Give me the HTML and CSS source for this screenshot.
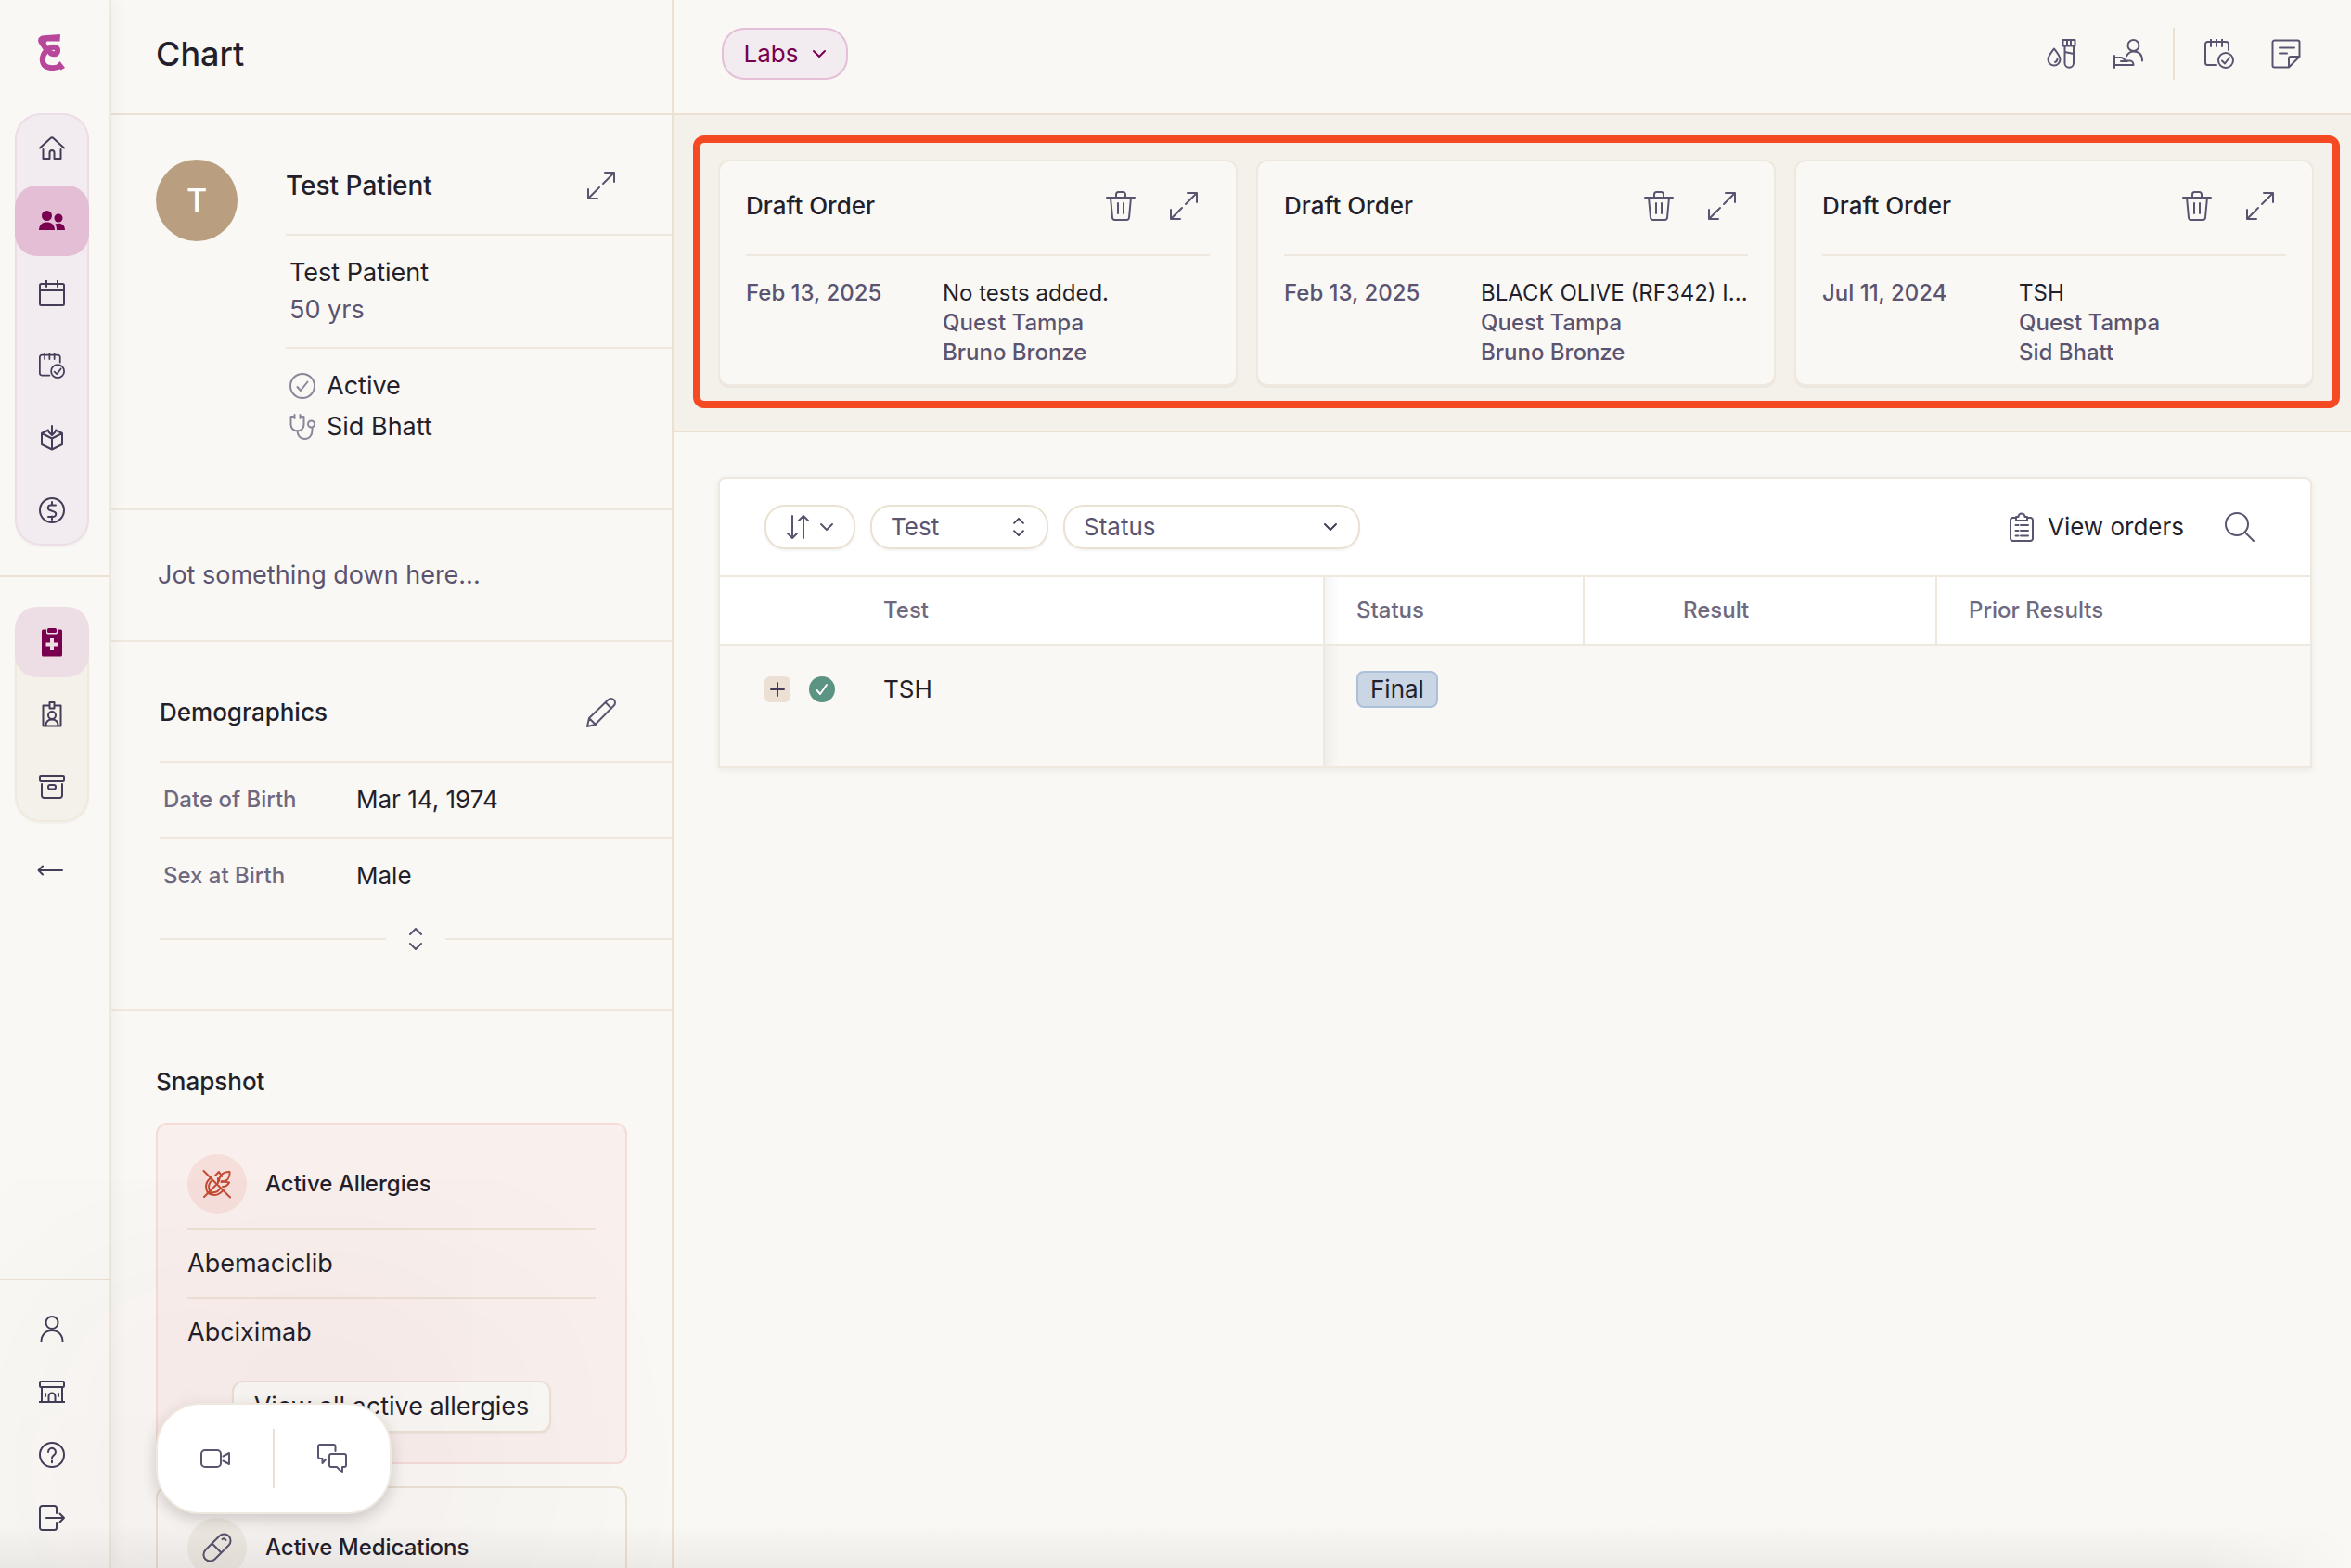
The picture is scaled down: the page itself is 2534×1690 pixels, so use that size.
FILE: index.html
```html
<!DOCTYPE html>
<html lang="en">
<head>
<meta charset="utf-8">
<title>Chart – Labs</title>
<link rel="stylesheet" href="styles.css">
</head>
<body>
<svg class="defs" aria-hidden="true">
  <symbol id="i-expand" viewBox="0 0 32 32"><path d="M18 14 29.500 2.500M20 2h10v10M14 18 2.500 29.500M2 20v10h10"/></symbol>
  <symbol id="i-trash" viewBox="0 0 32 32"><path d="M1 7h30M11 7V3.500A2.500 2.500 0 0 1 13.500 1h5A2.500 2.500 0 0 1 21 3.500V7M5 7l2 21.500A2.500 2.500 0 0 0 9.500 31h13a2.500 2.500 0 0 0 2.500-2.500L27 7M13 13v11M19 13v11"/></symbol>
  <symbol id="i-chev" viewBox="0 0 14 10"><path d="m1 2 6 6 6-6"/></symbol>
  <symbol id="i-updown" viewBox="0 0 16 24"><path d="m2 7 6-6 6 6M2 17l6 6 6-6"/></symbol>
  <symbol id="i-calcheck" viewBox="0 0 32 32"><path d="M13 28H3.500A2.500 2.500 0 0 1 1 25.500v-20A2.500 2.500 0 0 1 3.500 3h20A2.500 2.500 0 0 1 26 5.500V12M7 .500V8M13 .500V8M19 .500V8"/><circle cx="23" cy="23" r="8"/><path d="m19 23.500 3 3 5-6.500"/></symbol>
</svg>

<nav class="rail" aria-label="Main">
  <a class="logo" href="#" aria-label="Home page"><svg width="30" height="42" viewBox="0 0 30 42"><path d="M24 0 23.500 7.500 9.500 7.500 8.500 9.500 12.500 15.500 8 20 1.500 10.500C-1.500 5.500 .500 1.800 6 1.200zM23.500 29 29 36 24.500 38.500 20 33z"/><path class="swirl" d="M12.500 18c1 4 7.500 4.500 8.500 .500 .800-4.500-4-6-8.500-3.500C6 18.500 3.500 26 5.500 31c2 5.500 12 7 20 2.500"/></svg></a>
  <div class="pill pill-main">
    <a href="#" aria-label="Home"><svg width="28" height="28" viewBox="0 0 28 28"><path d="M1 13.500 12.500 3a2 2 0 0 1 3 0L27 13.500M4.500 15v10h7v-6.500a2.500 2.500 0 0 1 5 0V25h7V15"/></svg></a>
    <a href="#" class="on" aria-label="Patients"><svg class="solid" width="28" height="28" viewBox="0 0 28 28"><circle cx="8.500" cy="8.500" r="5.500"/><path d="M0 24c0-6 4-8.500 8.500-8.500S17 18 17 24z"/><circle cx="21" cy="11" r="4.500"/><path d="M19 24c0-3-.500-4.500-1.500-6.500C23 15.500 28 18 28 24z"/></svg></a>
    <a href="#" aria-label="Calendar"><svg width="28" height="28" viewBox="0 0 28 28"><rect x="1" y="4" width="26" height="23" rx="1.500"/><path d="M1 11h26M8 0v7M20 0v7"/></svg></a>
    <a href="#" aria-label="Tasks"><svg width="28" height="28"><use href="#i-calcheck"/></svg></a>
    <a href="#" aria-label="Inbox"><svg width="28" height="28" viewBox="0 0 28 28"><path d="M10 5.500 3 9l11 5.500L25 9l-7-3.500M3 9v12l11 5.500L25 21V9M14 14.500v12M14 1v10M10.500 7.500 14 11l3.500-3.500"/></svg></a>
    <a href="#" aria-label="Billing"><svg width="28" height="28" viewBox="0 0 28 28"><circle cx="14" cy="14" r="13"/><path d="M18 8.500h-5.500a2.750 2.750 0 0 0-1 5.300l5 1.800a2.750 2.750 0 0 1-1 5.300H10M14 5v3.500M14 20.500V24"/></svg></a>
  </div>
  <hr>
  <div class="pill pill-chart">
    <a href="#" class="on" aria-label="Chart"><svg class="solid" width="28" height="32" viewBox="0 0 28 32"><path d="M4.500 2.500H8v3.200c0 1 .800 1.800 1.800 1.800h8.400c1 0 1.800-.800 1.800-1.800V2.500h3.500A1.500 1.500 0 0 1 25 4v26a1.500 1.500 0 0 1-1.500 1.500h-19A1.500 1.500 0 0 1 3 30V4a1.500 1.500 0 0 1 1.500-1.500zM12 12v4.500H7.500v4H12V25h4v-4.500h4.500v-4H16V12z"/><rect x="9" y="1" width="10" height="5" rx="1.500"/></svg></a>
    <a href="#" aria-label="Patient badge"><svg width="28" height="28" viewBox="0 0 28 28"><path d="M11 4.500H4.500v22h19v-22H17M11.500 1h5v6.500h-5zM7.500 26c0-4 2.500-6.500 6.500-6.500s6.500 2.500 6.500 6.500"/><circle cx="14" cy="15" r="4"/></svg></a>
    <a href="#" aria-label="Archive"><svg width="28" height="28" viewBox="0 0 28 28"><rect x="1" y="2" width="26" height="6" rx="1"/><path d="M3 11v12.500A2.500 2.500 0 0 0 5.500 26h17a2.500 2.500 0 0 0 2.500-2.500V11"/><rect x="10" y="12" width="8" height="4.500" rx="2"/></svg></a>
  </div>
  <a class="back" href="#" aria-label="Back"><svg width="28" height="12" viewBox="0 0 28 12"><path d="M27 6H1.500M6 1.500 1.500 6 6 10.500"/></svg></a>
  <div class="foot">
    <a href="#" aria-label="Profile"><svg width="28" height="28" viewBox="0 0 28 28"><circle cx="14" cy="7.500" r="6.500"/><path d="M2.500 28c0-7 4.500-12 11.500-12s11.500 5 11.500 12"/></svg></a>
    <a href="#" aria-label="Practice"><svg width="28" height="28" viewBox="0 0 28 28"><rect x="1" y="3" width="26" height="6" rx="1"/><path d="M3 9v15.500M25 9v15.500M0 25h28M10.500 25v-6a3.500 3.500 0 0 1 7 0v6M7 16v3M21 16v3"/></svg></a>
    <a href="#" aria-label="Help"><svg width="28" height="28" viewBox="0 0 28 28"><circle cx="14" cy="14" r="13"/><path d="M10 11a4 4 0 1 1 6.200 3.200C14.700 15.200 14 15.800 14 17.500M14 20.500v1.800"/></svg></a>
    <a href="#" aria-label="Log out"><svg width="28" height="28" viewBox="0 0 28 28"><path d="M19 9V3.500A2.500 2.500 0 0 0 16.500 1h-13A2.500 2.500 0 0 0 1 3.500v21A2.500 2.500 0 0 0 3.500 27h13a2.500 2.500 0 0 0 2.500-2.500V19M8 14h19M22.500 9.500 27 14l-4.500 4.500"/></svg></a>
  </div>
</nav>

<aside class="panel">
  <header class="bar"><h1>Chart</h1></header>
  <section class="patient">
    <div class="avatar">T</div>
    <div class="info">
      <div class="title-row"><h2 class="name">Test Patient</h2><button class="icon" aria-label="Expand patient"><svg width="32" height="32"><use href="#i-expand"/></svg></button></div>
      <div class="who"><p>Test Patient</p><p class="muted">50 yrs</p></div>
      <ul class="facts">
        <li><svg width="28" height="28" viewBox="0 0 28 28"><circle cx="14" cy="14" r="13"/><path d="m8.500 15 3.500 4 7.500-9.500"/></svg>Active</li>
        <li><svg width="28" height="28" viewBox="0 0 28 28"><path d="M5.500 1v4M5.500 3H1.500v8.500a6.500 6.500 0 0 0 14 0V3h-4M11.500 1v4M8.500 18c0 5 3 9 8 9s8-4 8-9v-3"/><circle cx="23.500" cy="11" r="3.500"/></svg>Sid Bhatt</li>
      </ul>
    </div>
  </section>
  <section class="jot"><input type="text" aria-label="Notes" placeholder="Jot something down here..."></section>
  <section class="demo">
    <div class="title-row"><h2>Demographics</h2><button class="icon" aria-label="Edit demographics"><svg width="32" height="32" viewBox="0 0 32 32"><path d="M1 31l2-9L23.500 2.300a4.300 4.300 0 0 1 6.200 6.200L9.500 29zM20.500 5l6.500 6.500M3 22l7 7"/></svg></button></div>
    <dl>
      <div><dt>Date of Birth</dt><dd>Mar 14, 1974</dd></div>
      <div><dt>Sex at Birth</dt><dd>Male</dd></div>
    </dl>
    <div class="more"><button class="icon" aria-label="Show more"><svg width="16" height="24"><use href="#i-updown"/></svg></button></div>
  </section>
  <section class="snapshot">
    <h2>Snapshot</h2>
    <article class="snap allergy">
      <header><span class="dot"><svg width="32" height="32" viewBox="0 0 32 32"><path d="M1.500 2 30 30.500M2 30l5-5M14 7l4-4 3 5M18 13c1-7 5-10.500 11.500-10 .500 6.500-3 10.500-9 11M21 13l8 1.500c-1.500 3-4 4.500-7 4.500M10 9c-6 4-7.500 10-4 17 7 3.500 13 2 17-4M8 24c-2-6 0-10 3-12M8 25c5 1 9-.500 11-4M7 25l8-8M17 10v5"/></svg></span><h3>Active Allergies</h3></header>
      <ul><li>Abemaciclib</li><li>Abciximab</li></ul>
      <button class="view-all">View all active allergies</button>
    </article>
    <article class="snap">
      <header><span class="dot"><svg width="32" height="32" viewBox="0 0 32 32"><path d="M3.500 18.500 18.500 3.500a7 7 0 0 1 10 10l-15 15a7 7 0 0 1-10-10zM10.500 11.500l10 10M21.500 7c1.500-1 3-.500 4 1"/></svg></span><h3>Active Medications</h3></header>
    </article>
  </section>
</aside>

<main>
  <header class="bar main-bar">
    <button class="labs">Labs <svg width="14" height="10"><use href="#i-chev"/></svg></button>
    <div class="tools">
      <button class="icon" aria-label="Order labs"><svg width="32" height="32" viewBox="0 0 32 32"><path d="M8 10.500C4.500 15 1.500 18.500 1.500 22a6.500 6.500 0 0 0 13 0c0-3.500-3-7-6.500-11.500zM11.500 21.500c0 2-1 3-2.500 3.500M17.500 1h13v6.500h-13zM22 1v6.500M26 1v6.500M19.500 8v18a4.750 4.750 0 0 0 9.500 0V8M19.500 14l9.500 2"/></svg></button>
      <button class="icon" aria-label="Refer patient"><svg width="32" height="32" viewBox="0 0 32 32"><circle cx="21.500" cy="7" r="6"/><path d="M14 18.500c2-3.500 4.500-5 7.500-5 6 0 9.500 3.500 9.500 10M1 18v13M1 20h7c3 0 4 3.500 6 3.500h4c2 0 3.500 2 3.500 4.500H1M8 24h7"/></svg></button>
      <span class="sep"></span>
      <button class="icon" aria-label="Add task"><svg width="32" height="32"><use href="#i-calcheck"/></svg></button>
      <button class="icon" aria-label="Add note"><svg width="32" height="32" viewBox="0 0 32 32"><path d="M19 30.500H3.500A2 2 0 0 1 1.500 28.500v-25a2 2 0 0 1 2-2h25a2 2 0 0 1 2 2V19L19 30.500V21a2 2 0 0 1 2-2h9.500M9 9.500h16M9 15.500h8"/></svg></button>
    </div>
  </header>

  <section class="drafts">
    <article class="card">
      <header><h2>Draft Order</h2><button class="icon" aria-label="Delete draft"><svg width="32" height="32"><use href="#i-trash"/></svg></button><button class="icon" aria-label="Open draft"><svg width="32" height="32"><use href="#i-expand"/></svg></button></header>
      <div class="detail"><time>Feb 13, 2025</time><div><p class="tests">No tests added.</p><p>Quest Tampa</p><p>Bruno Bronze</p></div></div>
    </article>
    <article class="card">
      <header><h2>Draft Order</h2><button class="icon" aria-label="Delete draft"><svg width="32" height="32"><use href="#i-trash"/></svg></button><button class="icon" aria-label="Open draft"><svg width="32" height="32"><use href="#i-expand"/></svg></button></header>
      <div class="detail"><time>Feb 13, 2025</time><div><p class="tests">BLACK OLIVE (RF342) I...</p><p>Quest Tampa</p><p>Bruno Bronze</p></div></div>
    </article>
    <article class="card">
      <header><h2>Draft Order</h2><button class="icon" aria-label="Delete draft"><svg width="32" height="32"><use href="#i-trash"/></svg></button><button class="icon" aria-label="Open draft"><svg width="32" height="32"><use href="#i-expand"/></svg></button></header>
      <div class="detail"><time>Jul 11, 2024</time><div><p class="tests">TSH</p><p>Quest Tampa</p><p>Sid Bhatt</p></div></div>
    </article>
    <div class="highlight"></div>
  </section>

  <section class="results">
    <div class="filters">
      <button class="chip" aria-label="Sort"><svg width="24" height="26" viewBox="0 0 24 26"><path d="M6 1v24M1 20l5 5 5-5M18 25V1M13 6l5-5 5 5"/></svg><svg width="14" height="10"><use href="#i-chev"/></svg></button>
      <div class="pick pick-test"><select class="chip" aria-label="Test"><option>Test</option></select><svg width="14" height="20"><use href="#i-updown"/></svg></div>
      <div class="pick pick-status"><select class="chip" aria-label="Status"><option>Status</option></select><svg width="14" height="10"><use href="#i-chev"/></svg></div>
      <a class="orders" href="#"><svg width="28" height="32" viewBox="0 0 28 32"><path d="M8 6H4.500A2.500 2.500 0 0 0 2 8.500v20A2.500 2.500 0 0 0 4.500 31h19a2.500 2.500 0 0 0 2.500-2.500v-20A2.500 2.500 0 0 0 23.500 6H20M8 9V5h2.500a3.500 3.500 0 0 1 7 0H20v4zM7.500 14h3M13 14h8M7.500 20h3M13 20h8M7.500 25.500h3M13 25.500h8"/></svg>View orders</a>
      <button class="icon" aria-label="Search"><svg width="32" height="32" viewBox="0 0 32 32"><circle cx="13" cy="13" r="12"/><path d="M21.500 21.500 31 31"/></svg></button>
    </div>
    <table>
      <colgroup><col class="c1"><col class="c2"><col class="c3"><col></colgroup>
      <thead><tr><th class="first">Test</th><th class="stat">Status</th><th class="res">Result</th><th class="prior">Prior Results</th></tr></thead>
      <tbody><tr>
        <td class="first"><div class="test"><button class="plus" aria-label="Expand TSH"><svg width="16" height="16" viewBox="0 0 16 16"><path d="M8 1v14M1 8h14"/></svg></button><svg class="ok" width="28" height="28" viewBox="0 0 28 28"><circle cx="14" cy="14" r="14"/><path d="m8.500 15 3.500 4 7-10"/></svg><span>TSH</span></div></td>
        <td class="stat"><span class="badge">Final</span></td><td></td><td></td>
      </tr></tbody>
    </table>
  </section>
</main>

<div class="dock">
  <button class="icon" aria-label="Video call"><svg width="32" height="24" viewBox="0 0 32 24"><rect x="1" y="3" width="21" height="18" rx="4"/><path d="M24.500 9.500 31 6v12l-6.500-3.500"/></svg></button>
  <span class="sep"></span>
  <button class="icon" aria-label="Messages"><svg width="32" height="32" viewBox="0 0 32 32"><path d="M19.500 8V3a2 2 0 0 0-2-2H3a2 2 0 0 0-2 2v11a2 2 0 0 0 2 2h2.500v5l3.500-4"/><path d="M15 11h14a2 2 0 0 1 2 2v10a2 2 0 0 1-2 2h-2v6l-6-6h-6a2 2 0 0 1-2-2V13a2 2 0 0 1 2-2z"/></svg></button>
</div>
</body>
</html>
```
FILE: styles.css
```css
:root {
  --bg: #faf8f4;
  --sand: #f4f1ea;
  --line: #efe8de;
  --line-strong: #ebe1d2;
  --ink: #231f2b;
  --muted: #5b5470;
  --label: #6f6980;
  --plum: #78004f;
}

* { box-sizing: border-box; }

body {
  margin: 0;
  height: 100vh;
  overflow: hidden;
  display: grid;
  grid-template-columns: 120px 606px minmax(0, 1fr);
  background: var(--bg);
  color: var(--ink);
  font: 400 26px/40px Inter, "Open Sans", sans-serif;
}

/* Soft fade along the bottom edge of the window */
body::after {
  content: "";
  position: absolute;
  inset: auto 0 0 0;
  height: 48px;
  background: linear-gradient(to top, rgba(40, 30, 40, .06), rgba(40, 30, 40, 0));
  mask-image: linear-gradient(to left, transparent, #000 160px);
  pointer-events: none;
}

h1, h2, h3, p, ul, dl, dd { margin: 0; padding: 0; }
h1, h2, h3, dt, th { font-weight: 500; }
h1 { font-size: 36px; }
h2 { font-size: 26px; }
h3 { font-size: 24px; }
ul { list-style: none; }
svg { fill: none; stroke: currentColor; stroke-width: 2; stroke-linecap: round; stroke-linejoin: round; flex: none; display: block; }
.solid { fill: currentColor; stroke: none; }
.defs { position: absolute; width: 0; height: 0; }
button, input, select { font: inherit; color: inherit; }
button { padding: 0; cursor: pointer; }
a { color: inherit; text-decoration: none; }
.icon { display: flex; align-items: center; justify-content: center; border: 0; background: none; color: var(--muted); }
.muted { color: var(--muted); }

/* Navigation rail */
.rail {
  position: relative;
  display: flex;
  flex-direction: column;
  height: 100vh;
  padding-bottom: 20px;
  border-right: 2px solid var(--line);
  box-shadow: 2px 0 16px rgba(60, 40, 50, .06);
  color: #453d58;
}
.rail a { display: flex; align-items: center; justify-content: center; height: 76px; }
.rail .logo { height: 122px; padding: 2px 6px 8px 0; color: #b8469a; }
.logo svg { fill: currentColor; stroke: none; }
.logo .swirl { fill: none; stroke: currentColor; stroke-width: 6; stroke-linecap: butt; }
.pill {
  display: grid;
  gap: 2px;
  width: 80px;
  margin-left: 16px;
  border-radius: 28px;
  box-shadow: inset 0 0 0 2px var(--pill-line), 0 2px 2px rgba(60, 40, 50, .04);
  background: var(--pill);
}
.pill-main { --pill: #f2ebf0; --pill-line: #eddde6; }
.pill-chart { --pill: #f4f1ea; --pill-line: #f0e9de; }
.pill .on { border-radius: 24px; color: var(--plum); background: #e3bed4; }
.pill-chart .on { background: #eddde5; }
.rail hr { width: 100%; height: 2px; margin: 32px 0; border: 0; background: var(--line-strong); }
.rail .back { height: 104px; padding-right: 10px; }
.foot { margin: auto -2px 0 0; padding: 18px 8px 0 0; border-top: 2px solid var(--line-strong); }
.foot a { height: 68px; }

/* Chart panel */
.panel { display: flex; flex-direction: column; height: 100vh; overflow: hidden; border-right: 2px solid var(--line-strong); }
.panel > * { flex: none; }
.bar { display: flex; align-items: center; height: 124px; padding: 0 48px 6px; border-bottom: 2px solid var(--line-strong); }
.panel section:not(.snapshot) { border-bottom: 2px solid var(--line); }
.patient { display: flex; gap: 52px; padding: 24px 0 66px 48px; }
.avatar { flex: none; width: 88px; height: 88px; margin-top: 24px; border-radius: 50%; background: #b99f80; color: #fff; font-size: 34px; font-weight: 500; line-height: 88px; text-align: center; }
.info { flex: 1; }
.title-row { display: flex; align-items: center; justify-content: space-between; height: 106px; padding-right: 60px; border-bottom: 2px solid var(--line); }
.name { font-size: 28px; }
.who, .facts, .jot, .snap ul, .view-all { font-size: 27px; }
.who { padding: 20px 4px; border-bottom: 2px solid var(--line); }
.facts { padding: 18px 4px 0; }
.facts li { display: flex; align-items: center; gap: 12px; height: 44px; }
.facts svg { color: #8b8699; }
.jot { display: flex; height: 142px; padding: 0 48px; }
.jot input { width: 100%; border: 0; outline: 0; background: none; padding: 0 2px; }
.jot input::placeholder { color: var(--muted); opacity: 1; }
.demo { padding: 24px 0 48px 52px; }
dl > div { display: flex; align-items: center; height: 82px; padding-left: 4px; border-bottom: 2px solid var(--line); }
dl > div:last-child { height: 80px; border: 0; }
dt { width: 208px; color: var(--label); font-size: 24px; }
.more { display: flex; align-items: center; height: 56px; }
.more::before, .more::after { content: ""; flex: 1; height: 2px; background: var(--line); }
.more .icon { width: 64px; height: 56px; }
.snapshot { padding: 48px 48px 0; }
.snapshot h2 { margin-bottom: 16px; line-height: 56px; }
.snap { margin-bottom: 24px; padding: 32px; border: 2px solid var(--line-strong); border-radius: 12px; background: var(--bg); }
.snap header { display: flex; align-items: center; gap: 20px; padding-bottom: 16px; border-bottom: 2px solid var(--line-strong); }
.dot { display: grid; place-items: center; width: 64px; height: 64px; border-radius: 50%; background: #f1ede5; color: var(--muted); }
.allergy { border-color: #f6dcd9; background: #f9efec; }
.allergy .dot { background: #f6dfda; color: #c44a34; }
.snap li { line-height: 72px; }
.snap li + li { border-top: 2px solid var(--line-strong); }
.view-all { display: block; margin: 16px auto 0; width: 344px; height: 56px; border: 2px solid var(--line-strong); border-radius: 12px; background: var(--bg); box-shadow: 0 2px 2px rgba(60, 40, 50, .05); }

/* Main area */
.main-bar { justify-content: space-between; padding: 0 34px 6px 52px; }
.labs { display: flex; align-items: center; justify-content: center; gap: 16px; width: 136px; height: 56px; border: 2px solid #e5bfd7; border-radius: 24px; background: #f2ebf0; color: var(--plum); }
.tools { display: flex; }
.tools .icon { width: 72px; height: 56px; }
.sep { width: 2px; background: var(--line-strong); }
.tools .sep { margin: 0 12px; }
.drafts { position: relative; display: grid; grid-template-columns: repeat(3, minmax(0, 1fr)); gap: 20px; padding: 48px 40px 48px 48px; border-bottom: 2px solid var(--line-strong); background: var(--sand); }
.highlight { position: absolute; inset: 22px 12px 24px 21px; border: 8px solid #f54923; border-radius: 12px; pointer-events: none; }
.card { padding: 0 28px 18px; border: 2px solid var(--line); border-radius: 12px; background: var(--bg); box-shadow: 0 2px 0 #ebe6df; }
.card header { display: flex; align-items: center; gap: 36px; height: 102px; padding: 0 12px 4px 0; border-bottom: 2px solid var(--line); }
.card h2 { margin-right: auto; }
.detail { display: grid; grid-template-columns: 212px minmax(0, 1fr); padding-top: 24px; color: var(--muted); font-size: 24px; font-weight: 500; line-height: 32px; }
.detail .tests { overflow: hidden; white-space: nowrap; color: var(--ink); font-weight: 400; }

.results { margin: 48px 42px 0 48px; border: 2px solid var(--line); border-radius: 8px 8px 0 0; box-shadow: 0 2px 6px rgba(40, 30, 50, .07); background: #fff; }
.filters { display: flex; align-items: center; gap: 16px; height: 106px; padding: 0 60px 0 48px; border-bottom: 2px solid var(--line); }
.chip { height: 48px; border: 2px solid var(--line-strong); border-radius: 22px; background: #fff; color: var(--muted); box-shadow: 0 2px 2px rgba(60, 40, 50, .05); }
button.chip { display: flex; align-items: center; justify-content: center; gap: 12px; width: 98px; }
.pick { display: grid; align-items: center; }
.pick > * { grid-area: 1 / 1; }
.pick svg { justify-self: end; margin-right: 25px; pointer-events: none; color: #453d58; }
.pick select { width: 100%; padding: 0 20px; appearance: none; }
.pick-test { width: 192px; }
.pick-status { width: 320px; }
.orders { display: flex; align-items: center; gap: 14px; margin: 0 28px 0 auto; }
.orders svg { color: var(--muted); }
table { width: 100%; table-layout: fixed; border-collapse: separate; border-spacing: 0; text-align: left; }
.c1 { width: 652px; }
.c2 { width: 280px; }
.c3 { width: 380px; }
th { height: 74px; padding: 0; border-bottom: 2px solid var(--line); color: var(--label); font-size: 24px; }
th.first { padding-left: 176px; }
th.stat, td.stat { padding-left: 34px; background-image: linear-gradient(to right, rgba(60, 40, 110, .05), rgba(60, 40, 110, 0) 16px); }
th.res { padding-left: 106px; }
th.prior { padding-left: 34px; }
.first, th:nth-child(2), th:nth-child(3) { border-right: 2px solid var(--line); }
td { height: 130px; padding: 27px 0 0; vertical-align: top; background-color: var(--bg); }
.test { display: flex; align-items: center; height: 40px; padding-left: 48px; }
.plus { display: grid; place-items: center; width: 28px; height: 28px; border: 0; border-radius: 6px; background: #ebe0d3; color: #453d58; }
.ok { margin: 0 52px 0 20px; }
.ok circle { fill: #5c9484; stroke: none; }
.ok path { stroke: #fff; }
.badge { display: inline-block; height: 40px; padding: 0 13px; border: 2px solid #adc0da; border-radius: 8px; background: #cad6e4; line-height: 36px; }

/* Floating communication dock */
.dock { position: absolute; left: 168px; bottom: 58px; display: flex; align-items: center; width: 254px; height: 120px; border: 2px solid var(--line); border-radius: 48px; background: #fff; box-shadow: 0 6px 16px rgba(60, 40, 50, .2), 0 0 320px 160px rgba(60, 40, 50, .035); }
.dock .icon { flex: 1; height: 100%; }
.dock .sep { height: 64px; }
```
